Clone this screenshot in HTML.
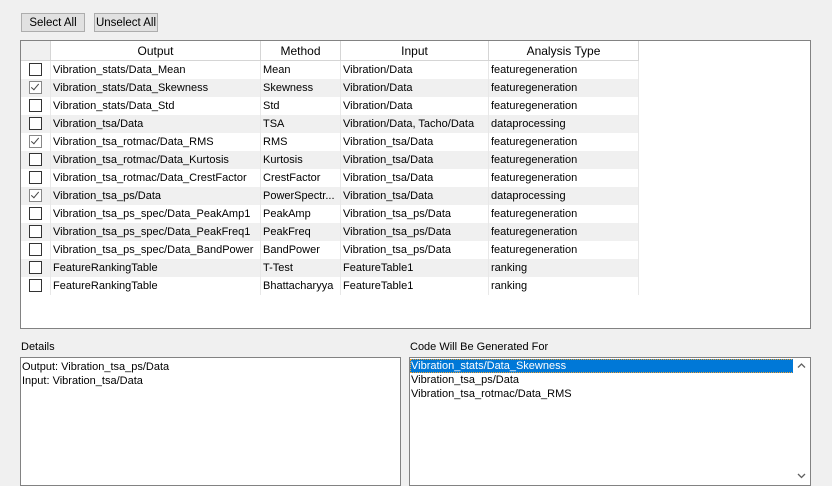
<!DOCTYPE html>
<html><head><style>
body{margin:0;width:832px;height:485px;background:#f0f0f0;font-family:"Liberation Sans",sans-serif;font-size:11px;color:#000;position:relative;overflow:hidden}
.a{position:absolute}
.btn{position:absolute;top:13px;height:17px;border:1px solid #adadad;background:#e1e1e1;text-align:center;line-height:19px;font-size:11.5px}
#tbl{left:20px;top:40px;width:789px;height:287px;border:1px solid #828282;background:#fff}
.hd{position:absolute;top:0;border-bottom:1px solid #d5d5d5;border-right:1px solid #d5d5d5;text-align:center;line-height:21px;font-size:12px;background:#fff;box-sizing:border-box;height:20px}
.row{position:absolute;left:0;width:618px;height:18px}
.row.g{background:#f0f0f0}
.c{position:absolute;top:0;height:18px;line-height:18px;padding-left:2px;white-space:nowrap;overflow:hidden;border-right:1px solid #e8e8e8;box-sizing:border-box}
.cb{position:absolute;left:8px;top:2px;width:11px;height:11px;border:1px solid #333;background:#fff}
.cb.k{border-color:#888}
.cb.k:after{content:"";position:absolute;left:3px;top:0px;width:3px;height:7px;border:solid #444;border-width:0 1px 1px 0;transform:rotate(40deg)}
.box{position:absolute;top:357px;height:127px;border:1px solid #828282;background:#fff}
</style></head><body>
<div class="btn" style="left:21px;width:62px">Select All</div>
<div class="btn" style="left:94px;width:62px">Unselect All</div>
<div id="tbl" class="a">
<div class="hd" style="left:0;width:30px;background:#f0f0f0"></div>
<div class="hd" style="left:30px;width:210px">Output</div>
<div class="hd" style="left:240px;width:80px">Method</div>
<div class="hd" style="left:320px;width:148px">Input</div>
<div class="hd" style="left:468px;width:150px">Analysis Type</div>
<div id="rows"></div>
</div>
<script>
var d=[[0,"Vibration_stats/Data_Mean","Mean","Vibration/Data","featuregeneration"],
[1,"Vibration_stats/Data_Skewness","Skewness","Vibration/Data","featuregeneration"],
[0,"Vibration_stats/Data_Std","Std","Vibration/Data","featuregeneration"],
[0,"Vibration_tsa/Data","TSA","Vibration/Data, Tacho/Data","dataprocessing"],
[1,"Vibration_tsa_rotmac/Data_RMS","RMS","Vibration_tsa/Data","featuregeneration"],
[0,"Vibration_tsa_rotmac/Data_Kurtosis","Kurtosis","Vibration_tsa/Data","featuregeneration"],
[0,"Vibration_tsa_rotmac/Data_CrestFactor","CrestFactor","Vibration_tsa/Data","featuregeneration"],
[1,"Vibration_tsa_ps/Data","PowerSpectr...","Vibration_tsa/Data","dataprocessing"],
[0,"Vibration_tsa_ps_spec/Data_PeakAmp1","PeakAmp","Vibration_tsa_ps/Data","featuregeneration"],
[0,"Vibration_tsa_ps_spec/Data_PeakFreq1","PeakFreq","Vibration_tsa_ps/Data","featuregeneration"],
[0,"Vibration_tsa_ps_spec/Data_BandPower","BandPower","Vibration_tsa_ps/Data","featuregeneration"],
[0,"FeatureRankingTable","T-Test","FeatureTable1","ranking"],
[0,"FeatureRankingTable","Bhattacharyya","FeatureTable1","ranking"]];
var h="";d.forEach(function(r,i){h+='<div class="row'+(i%2?' g':'')+'" style="top:'+(20+i*18)+'px"><div class="c" style="left:0;width:30px"><div class="cb'+(r[0]?' k':'')+'"></div></div><div class="c" style="left:30px;width:210px">'+r[1]+'</div><div class="c" style="left:240px;width:80px">'+r[2]+'</div><div class="c" style="left:320px;width:148px">'+r[3]+'</div><div class="c" style="left:468px;width:150px">'+r[4]+'</div></div>'});
document.getElementById("rows").innerHTML=h;
</script>
<div class="a" style="left:21px;top:341px">Details</div>
<div class="box" style="left:20px;width:379px"><div style="padding:2px 0 0 1px;line-height:14px">Output: Vibration_tsa_ps/Data<br>Input: Vibration_tsa/Data</div></div>
<div class="a" style="left:410px;top:341px">Code Will Be Generated For</div>
<div class="box" style="left:409px;width:400px">
<div style="position:absolute;left:0;top:1px;width:383px;height:14px;background:#0078d7;color:#fff;line-height:14px;padding-left:1px;outline:1px dotted #f0a030;outline-offset:-1px">Vibration_stats/Data_Skewness</div>
<div style="position:absolute;left:1px;top:15px;line-height:14px">Vibration_tsa_ps/Data<br>Vibration_tsa_rotmac/Data_RMS</div>
<div style="position:absolute;right:0;top:0;width:17px;height:127px;background:#fff">
<svg width="17" height="127" style="position:absolute;left:0;top:0"><path d="M5 9.5L8.5 6L12 9.5" fill="none" stroke="#606060" stroke-width="1.3"/><path d="M5 116L8.5 119.5L12 116" fill="none" stroke="#606060" stroke-width="1.3"/></svg>
</div>
</div>
</body></html>
